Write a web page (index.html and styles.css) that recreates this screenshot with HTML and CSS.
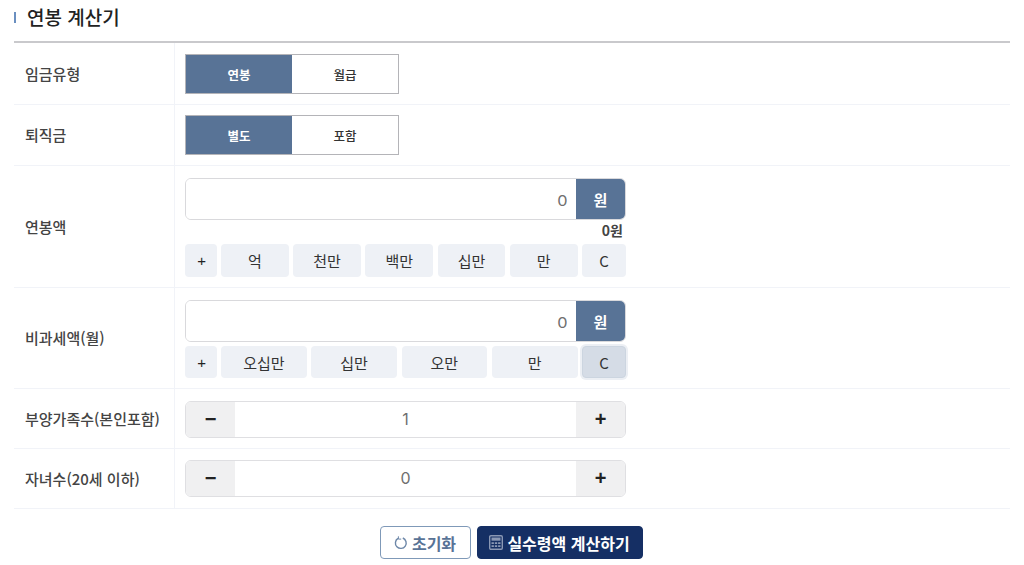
FILE: index.html
```html
<!DOCTYPE html>
<html lang="ko">
<head>
<meta charset="utf-8">
<title>연봉 계산기</title>
<link rel="stylesheet" href="styles.css">
</head>
<body>
<main class="calc">
  <h1 class="title">연봉 계산기</h1>
  <section class="form">
    <div class="row row-first">
      <div class="label">임금유형</div>
      <div class="field">
        <div class="toggle"><button class="toggle-btn is-on">연봉</button><button class="toggle-btn">월급</button></div>
      </div>
    </div>
    <div class="row">
      <div class="label">퇴직금</div>
      <div class="field">
        <div class="toggle"><button class="toggle-btn is-on">별도</button><button class="toggle-btn">포함</button></div>
      </div>
    </div>
    <div class="row row-money">
      <div class="label">연봉액</div>
      <div class="field">
        <div class="amount"><input class="amount-input" value="0" readonly><span class="amount-unit">원</span></div>
        <div class="amount-text">0원</div>
        <div class="keys">
          <button class="key key-plus">+</button>
          <button class="key key-grow">억</button>
          <button class="key key-grow">천만</button>
          <button class="key key-grow">백만</button>
          <button class="key key-grow">십만</button>
          <button class="key key-grow">만</button>
          <button class="key key-clear">C</button>
        </div>
      </div>
    </div>
    <div class="row row-money">
      <div class="label">비과세액(월)</div>
      <div class="field">
        <div class="amount"><input class="amount-input" value="0" readonly><span class="amount-unit">원</span></div>
        <div class="keys keys-close">
          <button class="key key-plus">+</button>
          <button class="key key-grow">오십만</button>
          <button class="key key-grow">십만</button>
          <button class="key key-grow">오만</button>
          <button class="key key-grow">만</button>
          <button class="key key-clear is-focus">C</button>
        </div>
      </div>
    </div>
    <div class="row row-step">
      <div class="label">부양가족수(본인포함)</div>
      <div class="field">
        <div class="stepper"><button class="step step-minus">−</button><input class="step-input" value="1" readonly><button class="step">+</button></div>
      </div>
    </div>
    <div class="row row-step">
      <div class="label">자녀수(20세 이하)</div>
      <div class="field">
        <div class="stepper"><button class="step step-minus">−</button><input class="step-input" value="0" readonly><button class="step">+</button></div>
      </div>
    </div>
  </section>
  <div class="actions">
    <button class="btn btn-reset">
      <svg class="icon" viewBox="0 0 14 14" width="14" height="14" aria-hidden="true"><path d="M8.8 2A5.4 5.4 0 1 1 4 2.4" fill="none" stroke="#6d87a8" stroke-width="1.4"/><path d="M4.4 0.3V3.1H7.2" fill="none" stroke="#6d87a8" stroke-width="1"/></svg>
      초기화
    </button>
    <button class="btn btn-calc">
      <svg class="icon" viewBox="0 0 14 15" width="14" height="15" aria-hidden="true"><rect x="0.7" y="0.7" width="12.6" height="13.6" rx="1.2" fill="none" stroke="#8b98b4" stroke-width="1.4"/><rect x="2.5" y="2.5" width="9" height="3.2" fill="#8b98b4"/><path d="M2.5 8.2h2.4M5.8 8.2h2.4M9.1 8.2h2.4M2.5 11.2h2.4M5.8 11.2h2.4M9.1 11.2h2.4" stroke="#8b98b4" stroke-width="1.8"/></svg>
      실수령액 계산하기
    </button>
  </div>
</main>
</body>
</html>
```
FILE: styles.css
```css
* { box-sizing: border-box; }
html, body { margin: 0; padding: 0; background: #fff; }
body {
  font-family: "Noto Sans CJK KR", "Noto Sans", sans-serif;
  color: #333;
  overflow: hidden;
}
button, input { font-family: inherit; }
button { cursor: pointer; }

.calc { width: 1024px; padding: 0 14px; }

.title {
  position: relative;
  margin: 0;
  height: 43px;
  padding: 3px 0 0 13px;
  font-size: 19px;
  line-height: 28px;
  font-weight: 500;
  color: #222;
  border-bottom: 2px solid #c9c9cc;
}
.title::before {
  content: "";
  position: absolute;
  left: 0;
  top: 12px;
  width: 2px;
  height: 11px;
  background: #6a8fc0;
}

.row {
  display: flex;
  border-bottom: 1px solid #f1f3f8;
}
.label {
  flex: 0 0 161px;
  display: flex;
  align-items: center;
  padding: 0 0 1px 11px;
  font-size: 15px;
  font-weight: 500;
  color: #444;
  border-right: 1px solid #f1f3f8;
}
.field { flex: 0 0 461px; padding: 10px; }
.row-first .field { padding-top: 11px; }
.row-money .field { padding: 12px 10px 10px; }
.row-step .field { padding: 12px 10px 10px; }
.row-step + .row-step .field { padding: 11px 10px 11px; }

.toggle {
  display: flex;
  width: 214px;
  height: 40px;
  border: 1px solid #b4b4b8;
}
.toggle-btn {
  flex: 1;
  border: 0;
  padding: 0;
  background: #fff;
  font-size: 12.5px;
  font-weight: 500;
  color: #333;
}
.toggle-btn.is-on { background: #587396; color: #fff; font-weight: 700; }

.amount {
  display: flex;
  width: 441px;
  height: 42px;
  border: 1px solid #d9d9dc;
  border-radius: 6px;
  overflow: hidden;
}
.amount-input {
  flex: 1;
  min-width: 0;
  border: 0;
  outline: 0;
  padding: 0 9px 0 0;
  text-align: right;
  font-family: Lato, sans-serif;
  font-size: 16px;
  color: #6f6f6f;
  background: #fff;
}
.amount-unit {
  flex: 0 0 49px;
  display: flex;
  align-items: center;
  justify-content: center;
  background: #587396;
  color: #fff;
  font-size: 15px;
  font-weight: 700;
}
.amount-text {
  width: 441px;
  height: 24px;
  padding-right: 3px;
  text-align: right;
  font-size: 14px;
  line-height: 21px;
  font-weight: 700;
  color: #444;
}

.keys { display: flex; gap: 4.5px; width: 441px; height: 33px; }
.keys-close { margin-top: 4px; height: 32px; }
.key {
  border: 0;
  padding: 0;
  border-radius: 4px;
  background: #eef1f6;
  font-size: 15px;
  color: #333;
}
.key-plus {
  flex: 0 0 31.5px;
  padding-left: 2px;
  font-family: "Liberation Sans", sans-serif;
  color: #222;
}
.key-grow { flex: 1 1 0; min-width: 0; }
.key-clear { flex: 0 0 44px; }
.key.is-focus {
  background: #d5dce6;
  border: 1px solid #ccd5e0;
  box-shadow: 0 0 0 2px #eceff4;
}

.stepper {
  display: flex;
  width: 441px;
  height: 37px;
  border: 1px solid #dfdfe2;
  border-radius: 6px;
  overflow: hidden;
}
.step {
  flex: 0 0 49px;
  border: 0;
  padding: 0 0 1px;
  background: #f0f0f1;
  font-family: "Liberation Sans", sans-serif;
  font-size: 20px;
  font-weight: 700;
  color: #222;
}
.step-input {
  flex: 1;
  min-width: 0;
  border: 0;
  outline: 0;
  text-align: center;
  font-family: Inter, sans-serif;
  font-size: 16px;
  color: #6f6f6f;
  background: #fff;
  padding: 0 0 2px;
}

.actions {
  display: flex;
  justify-content: center;
  gap: 6px;
  padding: 17px 2px 0 0;
}
.btn {
  display: flex;
  align-items: center;
  justify-content: center;
  gap: 4px;
  height: 33px;
  padding: 0;
  border-radius: 4px;
  font-size: 16px;
  font-weight: 700;
}
.btn-reset {
  width: 91px;
  background: #fff;
  border: 1px solid #7f99b8;
  color: #587396;
}
.btn-calc {
  width: 166px;
  background: #152f64;
  border: 1px solid #152f64;
  color: #fff;
}
.icon { flex: none; }
```
